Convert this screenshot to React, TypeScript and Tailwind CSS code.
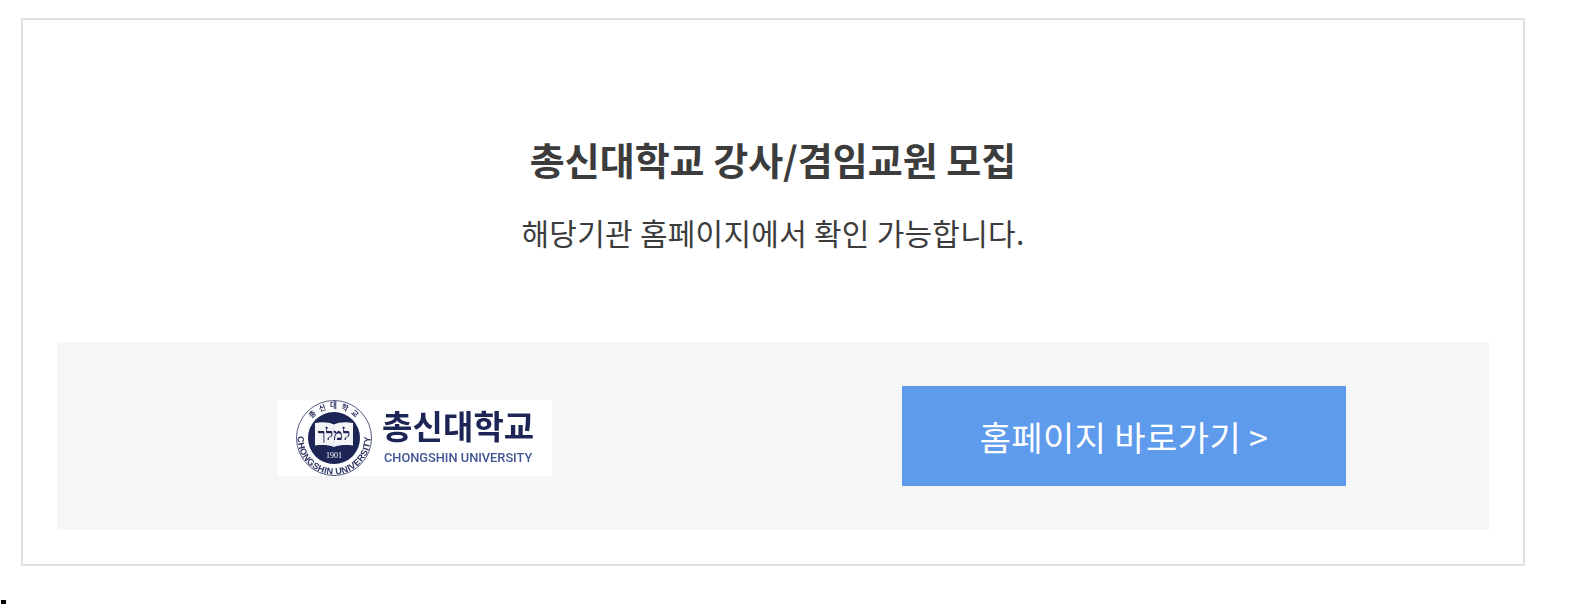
const KR = "font-['Noto_Sans_CJK_KR','Noto_Sans',sans-serif]";

function Seal() {
  return (
    <svg width="78" height="78" viewBox="0 0 78 78" className="shrink-0 blur-[0.3px]">
      <defs>
        <path id="sealTop" d="M9.500 39a29.500 29.500 0 0 1 59 0" />
        <path id="sealBottom" d="M2.500 39a36.500 36.500 0 0 0 73 0" />
      </defs>
      <circle cx="39" cy="39" r="37.500" fill="#fff" stroke="#27305f" strokeWidth="0.800" />
      <circle cx="39" cy="39" r="26" fill="#1d2456" />
      <text fontSize="7.500" fontWeight="700" fill="#27305f" letterSpacing="1" fontFamily="'Noto Sans CJK KR',sans-serif">
        <textPath href="#sealTop" startOffset="50%" textAnchor="middle">
          총 신 대 학 교
        </textPath>
      </text>
      <text fontSize="9" fontWeight="700" fill="#27305f" letterSpacing="0.300" fontFamily="'Liberation Sans',sans-serif">
        <textPath href="#sealBottom" startOffset="50%" textAnchor="middle">
          CHONGSHIN UNIVERSITY
        </textPath>
      </text>
      <path d="M20 24c7-1.500 14-1 19 1.500 5-2.500 12-3 19-1.500v22.500c-7-1-14-.5-19 1.500-5-2-12-2.500-19-1.500z" fill="#f4f4f6" />
      <path d="M39 26v21" stroke="#c9ccd8" strokeWidth="0.500" />
      <text x="39" y="41" textAnchor="middle" fontSize="16" fontWeight="700" fill="#1d2456" fontFamily="'Liberation Serif',serif" direction="rtl">
        למלך
      </text>
      <text x="39" y="59" textAnchor="middle" fontSize="8" fill="#fff" fontFamily="'Liberation Serif',serif">
        1901
      </text>
    </svg>
  );
}

function Logo() {
  return (
    <div className="flex h-[76px] w-[274px] items-center bg-white pl-[17px]">
      <Seal />
      <div className="ml-[9px] flex flex-col pt-[3px] blur-[0.3px]">
        <span className={`${KR} -mt-[6px] text-[33px] leading-[36px] font-bold tracking-[0.1px] text-[#1d2456]`}>총신대학교</span>
        <span className="mt-[7px] ml-[2px] font-['Roboto',sans-serif] text-[12.800px] leading-[16px] font-medium text-[#3f5595]">
          CHONGSHIN UNIVERSITY
        </span>
      </div>
    </div>
  );
}

export default function App() {
  return (
    <div className={`${KR} h-[604px] overflow-hidden bg-white pt-[18px] pl-[21px]`}>
      <div className="h-[548px] w-[1504px] border-2 border-[#e0e0e0] px-[34px]">
        <div className="flex h-[322px] flex-col items-center pt-[114px]">
          <h2 className="text-[38px] leading-[50px] font-bold text-[#3c3c3c]">총신대학교 강사/겸임교원 모집</h2>
          <p className="mt-[27px] text-[30px] leading-[42px] tracking-[0.25px] text-[#3c3c3c]">해당기관 홈페이지에서 확인 가능합니다.</p>
        </div>
        <div className="flex h-[188px] items-center bg-[#f6f6f6]">
          <div className="flex w-1/2 justify-center pt-[4px]">
            <Logo />
          </div>
          <div className="flex w-1/2 justify-center pr-[14px]">
            <a className="flex h-[100px] w-[444px] items-center justify-center bg-[#5f9bec] text-[34px] tracking-[0.4px] text-white">
              홈페이지 바로가기 &gt;
            </a>
          </div>
        </div>
      </div>
      <div className="mt-[34px] -ml-[20px] h-[4px] w-[5px] bg-black" />
    </div>
  );
}
